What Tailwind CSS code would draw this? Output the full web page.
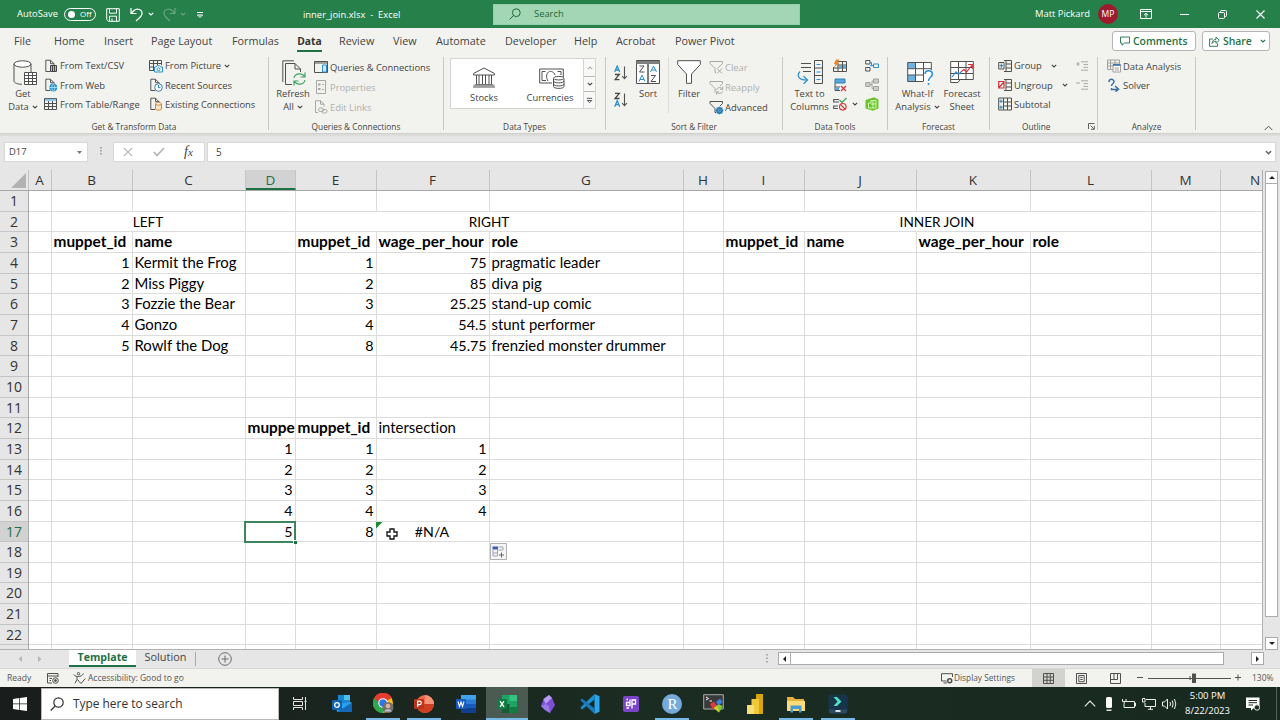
<!DOCTYPE html>
<html lang="en">
<head>
<meta charset="utf-8">
<title>inner_join.xlsx - Excel</title>
<script src="https://cdn.jsdelivr.net/npm/@tailwindcss/browser@4"></script>
</head>
<body class="w-[1280px] h-[720px] overflow-hidden bg-[#e6e6e6] font-['Open_Sans',sans-serif] text-[#444] flex flex-col">

<svg class="hidden">
  <symbol id="chev" viewBox="0 0 6 4"><path d="M.8 .8L3 3L5.2 .8" fill="none" stroke="currentColor" stroke-width="1.1"/></symbol>
  <symbol id="doc" viewBox="0 0 14 14"><path d="M6 12.5H1.8V1.2H6.5L10 4.7V6M6.5 1.2V4.7H10" fill="none" stroke="#555" stroke-width="1"/></symbol>
</svg>

<!-- Title bar -->
<header class="h-[28px] shrink-0 bg-[#26804a] text-white flex items-center text-[9.4px] whitespace-nowrap">
  <span class="ml-[17px] w-[47px]">AutoSave</span>
  <span class="w-[32px] h-[13px] rounded-full border border-white flex items-center pl-[3px]"><i class="size-[7px] rounded-full bg-white"></i><b class="ml-[5px] font-normal text-[8px] leading-none">Off</b></span>
  <svg class="ml-[10px] size-[14px] mt-[2px]" viewBox="0 0 14 14" fill="none" stroke="#fff"><path d="M.7 .7H13.3V13.3H2.5L.7 11.5ZM3.5 .7V5.2H10.5V.7M3.5 13V8.2H10.5V13M6 13V10.5"/></svg>
  <svg class="ml-[10px] w-[14px] h-[15px] mt-[1px]" viewBox="0 0 14 15" fill="none" stroke="#fff" stroke-width="1.2"><path d="M1 1V6.5H6.5M1 6.5L4 3.5C7 .8 12.5 2.5 12 7C11.8 9.5 9 11 6 14"/></svg>
  <svg class="ml-[4px] w-[6px] h-[4px]"><use href="#chev"/></svg>
  <svg class="ml-[8px] w-[14px] h-[15px] mt-[1px] opacity-30" viewBox="0 0 14 15" fill="none" stroke="#fff" stroke-width="1.2"><path d="M13 1V6.5H7.5M13 6.5L10 3.5C7 .8 1.5 2.5 2 7C2.2 9.5 5 11 8 14"/></svg>
  <svg class="ml-[4px] w-[6px] h-[4px] opacity-30"><use href="#chev"/></svg>
  <svg class="ml-[10px] w-[8px] h-[8px] mt-[1px]" viewBox="0 0 8 8" fill="none" stroke="#fff"><path d="M1 1.5H7M1.5 4L4 6.5L6.5 4Z"/></svg>
  <span class="ml-[99px] w-[190px] whitespace-pre pt-[2px]">inner_join.xlsx  -  Excel</span>
  <div class="w-[307px] h-[21px] bg-[#a3d6b4] text-[#1e6b3c] flex items-center border border-[#98cfab]">
    <svg class="ml-[15px] size-[12px]" viewBox="0 0 12 12" fill="none" stroke="#1e6b3c"><circle cx="7.3" cy="4.7" r="3.9"/><path d="M4.5 7.5L.6 11.4"/></svg>
    <span class="ml-[13px]">Search</span>
  </div>
  <span class="ml-[235px] w-[63px]">Matt Pickard</span>
  <span class="size-[20px] rounded-full bg-[#9e1a2d] flex items-center justify-center text-[8.5px]">MP</span>
  <svg class="ml-[22px] w-[12px] h-[10px]" viewBox="0 0 12 10" fill="none" stroke="#fff"><path d="M.5 .5H11.5V9.5H.5ZM.5 2.5H11.5M6 8.5V4.5M4 6.2L6 4.3L8 6.2"/></svg>
  <svg class="ml-[28px] w-[9px] h-[9px]" viewBox="0 0 9 9" stroke="#fff"><path d="M0 4.5H9"/></svg>
  <svg class="ml-[29px] size-[9px]" viewBox="0 0 9 9" fill="none" stroke="#fff"><rect x=".5" y="2.5" width="6" height="6" rx="1"/><path d="M2.5 2V1.5Q2.5 .5 3.5 .5H7.5Q8.5 .5 8.5 1.5V5.5Q8.5 6.5 7.5 6.5H7"/></svg>
  <svg class="ml-[29px] size-[9px]" viewBox="0 0 9 9" stroke="#fff" stroke-width="1.1"><path d="M.5 .5L8.5 8.5M8.5 .5L.5 8.5"/></svg>
</header>

<!-- Ribbon tabs -->
<nav class="h-[28px] shrink-0 bg-[#f2f3ee] flex text-[10.8px] leading-[26px] whitespace-nowrap">
  <span class="ml-[14px] w-[40px]">File</span><span class="w-[50px]">Home</span><span class="w-[47px]">Insert</span><span class="w-[81px]">Page Layout</span><span class="w-[64px]">Formulas</span><span class="w-[43px]"><b class="ml-[1px] block w-[25px] h-[24px] border-b-2 border-[#1e7145] text-[#333] font-bold text-[10.3px] text-center">Data</b></span><span class="w-[54px]">Review</span><span class="w-[43px]">View</span><span class="w-[69px]">Automate</span><span class="w-[69px]">Developer</span><span class="w-[42px]">Help</span><span class="w-[59px]">Acrobat</span><span class="w-[437px]">Power Pivot</span>
  <span class="mt-[3px] w-[84px] h-[20px] bg-white border border-[#b5b5b5] rounded-[3px] flex items-center text-[#1e7145] font-semibold text-[10.4px] leading-none">
    <svg class="ml-[7px] mr-[3px] size-[10px]" viewBox="0 0 10 10" fill="none" stroke="#1e7145" stroke-width=".9"><path d="M.5 1H9.5V7H4.5L2 9.3V7H.5Z"/></svg>Comments</span>
  <span class="mt-[3px] ml-[6px] w-[68px] h-[20px] bg-white border border-[#b5b5b5] rounded-[3px] flex items-center text-[#1e7145] font-semibold text-[10.4px] leading-none">
    <svg class="ml-[6px] mr-[3px] size-[11px]" viewBox="0 0 11 11" fill="none" stroke="#1e7145" stroke-width=".9"><path d="M4 3H.6V10.3H8.6V7.5M3 7.5C3.3 4.5 5 3.3 7 3.3V1L10.3 4.2L7 7.3V5.2C5.3 5.2 4.2 5.8 3 7.5Z"/></svg>Share<svg class="ml-[8px] w-[6px] h-[4px]"><use href="#chev"/></svg></span>
</nav>

<!-- Ribbon -->
<section class="h-[78px] shrink-0 bg-[#f2f3ee] border-b border-[#cfcfcd] flex text-[9.4px] leading-[13px] whitespace-nowrap">
  <!-- Get & Transform -->
  <div class="w-[268px] flex flex-col">
    <div class="h-[64px] shrink-0 flex">
      <div class="ml-[3px] w-[40px] pt-[4px] flex flex-col items-center">
        <svg class="ml-[4px] w-[24px] h-[26px] mb-[1px]" viewBox="0 0 24 26" fill="none" stroke="#505050"><ellipse cx="9.5" cy="4" rx="8.5" ry="3.2" fill="#fff"/><path d="M1 4V21C1 23 5 24.3 9 24.3M18 4V12"/><path d="M11.500 12.500H23.500V24.500H11.500Z" fill="#fff"/><path d="M11.500 15.500H23.500M11.500 18.500H23.500M11.500 21.500H23.500M15.500 12.500V24.500M19.500 12.500V24.500"/></svg>
        <span>Get</span><span class="flex items-center gap-[3px]">Data <svg class="w-[6px] h-[4px]"><use href="#chev"/></svg></span>
      </div>
      <div class="ml-[1px] w-[105px]">
        <div class="h-[19.4px] flex items-center gap-[2px]"><svg class="size-[14px]" viewBox="0 0 14 14"><use href="#doc"/><path d="M6.500 6.500H12.500V12.500H6.500ZM8.500 6.500V12.500M10.500 6.500V12.500" fill="#bbb" stroke="#444"/></svg>From Text/CSV</div>
        <div class="h-[19.4px] flex items-center gap-[2px]"><svg class="size-[14px]" viewBox="0 0 14 14"><use href="#doc"/><circle cx="9.300" cy="9.500" r="3.900" fill="#2b8fd0"/><path d="M5.500 9.500H13M9.300 5.700C7.300 8 7.300 11 9.300 13.300C11.300 11 11.300 8 9.300 5.700" fill="none" stroke="#dff" stroke-width=".6"/></svg>From Web</div>
        <div class="h-[19.4px] flex items-center gap-[2px]"><svg class="size-[14px]" viewBox="0 0 14 14" fill="none" stroke="#505050"><path d="M.5 1.500H12.500V12.500H.5ZM.5 6.500H12.500M.5 9.500H12.500M4.500 4V12.500M8.500 4V12.500"/><path d="M1 2.800H12" stroke="#7fbfe8" stroke-width="2"/></svg>From Table/Range</div>
      </div>
      <div>
        <div class="h-[19.4px] flex items-center gap-[2px]"><svg class="size-[14px]" viewBox="0 0 14 14" fill="none" stroke="#505050"><path d="M5 11.500H.5V1.500H12.500V6M.5 4.500H12.500M.5 8H5M4.500 1.500V11M8.500 1.500V6"/><path d="M5.500 8H7L8 6.700H10.500L11.500 8H13.500V13H5.500Z" fill="#fff" stroke="#2b8fd0"/><circle cx="9.500" cy="10.300" r="1.500" stroke="#2b8fd0"/></svg>From Picture<svg class="ml-[1px] w-[6px] h-[4px]"><use href="#chev"/></svg></div>
        <div class="h-[19.4px] flex items-center gap-[2px]"><svg class="size-[14px]" viewBox="0 0 14 14"><use href="#doc"/><circle cx="9.500" cy="9.500" r="3.800" fill="#fff" stroke="#2b7fb8"/><path d="M9.500 7V9.700H11.500" fill="none" stroke="#2b7fb8"/></svg>Recent Sources</div>
        <div class="h-[19.4px] flex items-center gap-[2px]"><svg class="size-[14px]" viewBox="0 0 14 14"><use href="#doc"/><path d="M6.500 7V12C6.500 13.500 12.500 13.500 12.500 12V7" fill="#fbe3c4" stroke="#d9822b"/><ellipse cx="9.500" cy="6.800" rx="3" ry="1.300" fill="#fff" stroke="#d9822b"/></svg>Existing Connections</div>
      </div>
    </div>
    <span class="text-center text-[8.3px] leading-[13px]">Get &amp; Transform Data</span>
  </div>
  <!-- Queries -->
  <div class="w-[175px] mt-[1px] mb-[3px] border-l border-[#c8c8c6] flex flex-col">
    <div class="h-[63px] shrink-0 flex">
      <div class="ml-[4px] w-[40px] pt-[3px] flex flex-col items-center">
        <svg class="ml-[2px] w-[24px] h-[26px] mb-[1px]" viewBox="0 0 24 26" fill="none" stroke="#505050"><path d="M.8 22V.8H12M3.500 24.500V3.500H13L18.500 9V12M13 3.500V9H18.500M3.500 24.500H10"/><path d="M12 18C13 13 20 12.500 22.500 16.500M23 12.500V17H18.500M23 20C22 25 15 25.500 12.500 21.500M12 25.500V21H16.500" stroke="#3fa35f" stroke-width="1.200"/></svg>
        <span>Refresh</span><span class="flex items-center gap-[3px]">All <svg class="w-[6px] h-[4px]"><use href="#chev"/></svg></span>
      </div>
      <div class="pl-[1px]">
        <div class="h-[20px] flex items-center gap-[2px]"><svg class="size-[14px]" viewBox="0 0 14 14" fill="none" stroke="#505050"><path d="M.5 1.500H13.500V12.500H.5ZM.5 3H13.500"/><path d="M8.500 5H12.500V12H8.500Z" fill="#cfe6f7" stroke="#2b8fd0"/></svg>Queries &amp; Connections</div>
        <div class="h-[20px] flex items-center gap-[2px] text-[#b0b0ae]"><svg class="size-[14px]" viewBox="0 0 14 14" fill="none" stroke="#a8a8a6"><path d="M2.500 .5H11.500V13.500H2.500ZM4 4.500H6M8 4.500H10M4 9.500H6M8 9.500H10" stroke-width="1"/><path d="M4 4.500H6.500M4 9H6.500" stroke-width="2"/></svg>Properties</div>
        <div class="h-[20px] flex items-center gap-[2px] text-[#b0b0ae]"><svg class="size-[14px]" viewBox="0 0 14 14" fill="none" stroke="#a8a8a6"><path d="M4 12.500H1.500V.7H6.500L10 4.200V6.500M6.500 .7V4.200H10"/><rect x="4.500" y="8" width="5" height="3.500" rx="1.700"/><rect x="8" y="9.500" width="5" height="3.500" rx="1.700"/></svg>Edit Links</div>
      </div>
    </div>
    <span class="shrink-0 text-center text-[8.3px]">Queries &amp; Connections</span>
  </div>
  <!-- Data Types -->
  <div class="w-[162px] mt-[1px] mb-[3px] border-l border-[#c8c8c6] flex flex-col">
    <div class="h-[63px] shrink-0 pt-[1px] pl-[6px]">
      <div class="w-[146px] h-[51px] bg-white border border-[#d4d4d2] flex">
        <div class="w-[66px] pt-[8px] flex flex-col items-center"><svg class="w-[24px] h-[21px] mb-[3px]" viewBox="0 0 24 21" fill="none" stroke="#505050"><path d="M1.500 6.500L12 1L22.500 6.500V8H1.500ZM3.500 17.500H20.500M1 20H23M4.500 8V17M7 8V17M10.500 8V17M13.500 8V17M17 8V17M19.500 8V17"/><path d="M1.500 18.500H22.500" stroke="#999" stroke-width="2"/></svg>Stocks</div>
        <div class="w-[66px] pt-[8px] flex flex-col items-center"><svg class="ml-[4px] w-[26px] h-[22px] mb-[2px]" viewBox="0 0 26 22" fill="none" stroke="#505050"><path d="M13 16H.7V2H24.300V10M3 4.500V13.500M3 4.500H6.500M18.500 4.500H22V8M3 13.500H7"/><path d="M9 14C7 11 7 7 9.500 5C12 3.500 15 5 16 8"/><path d="M14.500 11.500V19.500C14.500 22 25 22 25 19.500V11.500M14.500 14C14.500 16.500 25 16.500 25 14M14.500 17C14.500 19.500 25 19.500 25 17" fill="#fff"/><ellipse cx="19.700" cy="11.200" rx="5.200" ry="1.800" fill="#fff"/></svg>Currencies</div>
        <div class="w-[12px] border-l border-[#d4d4d2] flex flex-col text-[#444] bg-[#f8f8f6]">
          <i class="h-[17px] flex items-center justify-center opacity-40"><svg class="w-[6px] h-[4px] rotate-180"><use href="#chev"/></svg></i>
          <i class="h-[16px] border-y border-[#bbb] flex items-center justify-center"><svg class="w-[6px] h-[4px]"><use href="#chev"/></svg></i>
          <i class="h-[16px] flex items-center justify-center"><svg class="w-[7px] h-[7px]" viewBox="0 0 8 8" fill="none" stroke="#444"><path d="M1 1.500H7M1.500 4L4 6.500L6.500 4Z"/></svg></i>
        </div>
      </div>
    </div>
    <span class="shrink-0 text-center text-[8.3px]">Data Types</span>
  </div>
  <!-- Sort & Filter -->
  <div class="w-[177px] mt-[1px] mb-[3px] border-l border-[#c8c8c6] flex flex-col">
    <div class="h-[63px] shrink-0 flex">
      <div class="ml-[8px] w-[15px] pt-[8px] flex flex-col gap-[11px]">
        <svg class="w-[14px] h-[16px]" viewBox="0 0 14 16" fill="none" stroke-width="1.300"><path d="M.7 7L3.200 1L5.700 7M1.500 5H5" stroke="#2b8fd0"/><path d="M1 9.500H5.300L1 14.700H5.500" stroke="#444"/><path d="M10.500 1.500V13.500M8 11L10.500 13.700L13 11" stroke="#505050" stroke-width="1.100"/></svg>
        <svg class="w-[14px] h-[16px]" viewBox="0 0 14 16" fill="none" stroke-width="1.300"><path d="M1 1.300H5.300L1 6.500H5.500" stroke="#444"/><path d="M.7 14.700L3.200 8.700L5.700 14.700M1.500 12.700H5" stroke="#2b8fd0"/><path d="M10.500 1.500V13.500M8 11L10.500 13.700L13 11" stroke="#505050" stroke-width="1.100"/></svg>
      </div>
      <div class="w-[38px] pt-[3px] flex flex-col items-center"><svg class="w-[24px] h-[24px] mb-[3px]" viewBox="0 0 24 24" fill="none" stroke="#505050"><path d="M.5 .5H23.500V23.500H.5Z" fill="#fff"/><path d="M.5 2.500H23.500" stroke-width="3" stroke="#808080"/><path d="M12 4V23.500" stroke-width="1.500"/><path d="M3.500 6H8L3.500 12H8.500M15 15.500H19.500L15 21.500H20"/><path d="M3 21.500L6 15L9 21.500M4 19.500H8M14.500 12L17.500 6L20.500 12M15.500 10H19.500" stroke="#2b8fd0"/></svg>Sort</div>
      <div class="w-[41px] h-[56px] ml-[1px] pt-[3px] flex flex-col items-center border-l border-[#dededc]"><svg class="w-[24px] h-[24px] mb-[3px]" viewBox="0 0 24 24" fill="#fff" stroke="#505050"><path d="M.7 .7H23.300V4.500L14.500 14V23.300H9.500V14L.7 4.500Z"/></svg>Filter</div>
      <div>
        <div class="h-[20px] flex items-center gap-[1px] text-[#b0b0ae]"><svg class="size-[15px]" viewBox="0 0 15 15" fill="none" stroke="#a8a8a6"><path d="M1 1.500H13.500V3.500L9 8M1 1.500V3.500L6 8.500V12.500H7M8 8.500L13 13.500M13 8.500L8 13.500"/></svg>Clear</div>
        <div class="h-[20px] flex items-center gap-[1px] text-[#b0b0ae]"><svg class="size-[15px]" viewBox="0 0 15 15" fill="none" stroke="#a8a8a6"><path d="M1 1.500H13.500V3.500L11 6M1 1.500V3.500L6 8.500V12.500M7.500 10C8 7 12 7 13.500 9M13.700 6.500V9.300H11M14 11C13 14 9 14 7.700 12M7.500 14.500V11.800H10"/></svg>Reapply</div>
        <div class="h-[20px] flex items-center gap-[1px]"><svg class="size-[15px]" viewBox="0 0 15 15" fill="none" stroke="#505050"><path d="M1 1.500H13.500V3.500L11 6M1 1.500V3.500L6 8.500V12.500H7"/><circle cx="10.500" cy="10.500" r="2.600" fill="#fff" stroke="#2b7fb8" stroke-width="1.800"/><path d="M10.500 6.500V14.500M6.500 10.500H14.500M7.700 7.700L13.300 13.300M13.300 7.700L7.700 13.300" stroke="#2b7fb8" stroke-width=".8"/></svg>Advanced</div>
      </div>
    </div>
    <span class="shrink-0 text-center text-[8.3px]">Sort &amp; Filter</span>
  </div>
  <!-- Data Tools -->
  <div class="w-[105px] mt-[1px] mb-[3px] border-l border-[#c8c8c6] flex flex-col">
    <div class="h-[63px] shrink-0 flex">
      <div class="ml-[6px] w-[41px] pt-[3px] flex flex-col items-center"><svg class="w-[26px] h-[24px] mb-[3px]" viewBox="0 0 26 24" fill="none" stroke="#505050"><path d="M4 3.500H14M4 7.500H14M6 11.500H14"/><path d="M17.500 .5H25.500V23.500H17.500ZM17.500 8H25.500M17.500 15.500H25.500"/><path d="M19.500 4.500H23.500M19.500 12H23.500M19.500 19.500H23.500M3 11.500C-.5 15 1 20 10 20M6.500 16L10.500 20L6.500 24" stroke="#2b8fd0" stroke-width="1.200"/></svg><span>Text to</span><span>Columns</span></div>
      <div class="ml-[3px] w-[32px] -mt-px">
        <div class="h-[19.4px] flex items-center"><svg class="size-[14px]" viewBox="0 0 14 14" fill="none" stroke="#505050"><path d="M5 2.500H13.500V12.500H.5V8M.5 9H13.500M5 6H13.500M5 4V12.500M9.500 2.500V12.500"/><path d="M6 6.500H9V9H6ZM10 6.500H13V9H10Z" fill="#5ba7dd" stroke="none"/><path d="M3 .5H6.500L4.800 3.500H6.500L1 8.500L2.500 5H.8Z" fill="#e8892b" stroke="none"/></svg></div>
        <div class="h-[19.4px] flex items-center"><svg class="size-[14px]" viewBox="0 0 14 14" fill="none" stroke="#2b7fb8"><path d="M2 1H12V5H2Z" fill="#5ba7dd"/><path d="M2 5V12.500H7M2 9H7" stroke="#505050"/><path d="M2.500 9.500H6V12H2.500Z" fill="#5ba7dd" stroke="none"/><path d="M8 8L13 13M13 8L8 13" stroke="#d13438" stroke-width="1.200"/></svg></div>
        <div class="h-[19.4px] flex items-center"><svg class="size-[14px]" viewBox="0 0 14 14" fill="none" stroke="#505050" stroke-width="1.100"><path d="M6 2.500H.7V5H6M5 9H.7V11.500H5"/><path d="M6.500 3L9 5.500L13.500 1" stroke="#2f9e55"/><circle cx="9.800" cy="9.800" r="3.300" stroke="#d13438"/><path d="M7.500 7.500L12 12" stroke="#d13438"/></svg><svg class="ml-[5px] w-[6px] h-[4px]"><use href="#chev"/></svg></div>
      </div>
      <div class="-mt-px">
        <div class="h-[19.4px] flex items-center"><svg class="size-[14px]" viewBox="0 0 14 14" fill="none" stroke="#505050"><path d="M.7 1.500H5V5H.7ZM.7 8.500H5V12H.7Z"/><path d="M8.500 5H13.500V8.500H8.500ZM5 3.500H6.500V6.500H8.500M5 6.700H8" stroke="#2b8fd0"/></svg></div>
        <div class="h-[19.4px] flex items-center"><svg class="size-[14px]" viewBox="0 0 14 14" fill="#ccc" stroke="#a0a09e"><path d="M.7 4.500H5V8.500H.7ZM8.500 1H13.500V5H8.500ZM8.500 8.500H13.500V12.500H8.500Z"/><path d="M5 6.500H7M8.500 3H7V10.500H8.500" fill="none"/></svg></div>
        <div class="h-[19.4px] flex items-center"><svg class="size-[14px]" viewBox="0 0 14 14"><path d="M.5 3L9 .3L13.500 2.500V11.500L8 13.700L.5 11.500Z" fill="#6cc52a"/><path d="M3.500 10V6H6V3.500H11V11H3.500ZM8 4V11M6 7H11" fill="none" stroke="#e9ffd8" stroke-width=".8"/></svg></div>
      </div>
    </div>
    <span class="shrink-0 text-center text-[8.3px]">Data Tools</span>
  </div>
  <!-- Forecast -->
  <div class="w-[102px] mt-[1px] mb-[3px] border-l border-[#c8c8c6] flex flex-col">
    <div class="h-[63px] shrink-0 flex">
      <div class="ml-[7px] w-[45px] pt-[3px] flex flex-col items-center"><svg class="ml-[4px] w-[26px] h-[25px] mb-[2px]" viewBox="0 0 26 25" fill="none" stroke="#505050"><path d="M.7 2.500H24.300V21.500H.7Z" fill="#fff" stroke="none"/><path d="M.7 2.500H8.500V8.500H.7ZM.7 15H8.500V21.500H.7Z" fill="#6fb3e3" stroke="none"/><path d="M16 21.500H.7V2.500H24.300V10M.7 8.700H24M.7 15H16M8.500 2.500V21.500M16.500 2.500V21.500"/><path d="M18 14C18 9.500 25.300 9.500 25.300 14C25.300 17.500 21.500 17 21.500 21M21.500 23V25" stroke="#2b8fd0" stroke-width="1.500"/></svg><span>What-If</span><span class="flex items-center gap-[3px]">Analysis <svg class="w-[6px] h-[4px]"><use href="#chev"/></svg></span></div>
      <div class="w-[44px] pt-[3px] flex flex-col items-center"><svg class="w-[24px] h-[24px] mb-[3px]" viewBox="0 0 24 24" fill="none" stroke="#505050"><path d="M.7 1.500H23.300V19.500H10L8 22.500H.7Z" fill="#fff"/><path d="M.7 7.500H23M.7 13.500H23M8.500 1.500V19.500M16 1.500V19.500M.7 19.500H10"/><path d="M2 17L6 12L8.500 14.500L12 11" stroke="#2b8fd0" stroke-width="1.200"/><path d="M12 11L14 9.500L16.500 12L22 5M18 4.500H22.300V9" stroke="#d13438" stroke-width="1.200"/></svg><span>Forecast</span><span>Sheet</span></div>
    </div>
    <span class="shrink-0 text-center text-[8.3px]">Forecast</span>
  </div>
  <!-- Outline -->
  <div class="w-[108px] mt-[1px] mb-[3px] border-l border-[#c8c8c6] flex flex-col">
    <div class="h-[63px] shrink-0 flex">
      <div class="ml-[8px] w-[78px] -mt-px">
        <div class="h-[19.4px] flex items-center gap-[2px]"><svg class="size-[14px]" viewBox="0 0 14 14" fill="none" stroke="#505050"><path d="M.7 3.500H6V10H.7ZM8 1.500H13.500V12.500H8ZM8 5H13.500M8 9H13.500M6 1.500H8M6 12.500H8"/><path d="M3.300 4.500V9M1.500 6.700H5" stroke="#2b7fb8"/></svg>Group<svg class="ml-[7px] w-[6px] h-[4px]"><use href="#chev"/></svg></div>
        <div class="h-[19.4px] flex items-center gap-[2px]"><svg class="size-[14px]" viewBox="0 0 14 14" fill="none" stroke="#505050"><path d="M8 1.500H13.500V12.500H8ZM8 5H13.500M8 9H13.500M6 1.500H8M6 12.500H8"/><path d="M.7 3.500H6V10H.7ZM1 9.500L6 4" stroke="#d13438" stroke-width="1.200"/></svg>Ungroup<svg class="ml-[7px] w-[6px] h-[4px]"><use href="#chev"/></svg></div>
        <div class="h-[19.4px] flex items-center gap-[2px]"><svg class="size-[14px]" viewBox="0 0 14 14" fill="none" stroke="#505050"><path d="M5.500 1H13.500V13H5.500ZM5.500 5H13.500M5.500 9H13.500M9.500 1V13M.7 1H5.500M.7 1V13H5.500"/><path d="M3 2.500V6M1.300 4.200H4.800M3 8.500V12M1.300 10.200H4.800" stroke="#2b7fb8"/></svg>Subtotal</div>
      </div>
      <div class="-mt-px">
        <div class="h-[19.4px] flex items-center"><svg class="w-[12px] h-[10px]" viewBox="0 0 12 10" stroke="#a8a8a6"><path d="M0 3H4M2 1V5M5 .8H12M7.500 3.600H12M7.500 6.400H12M5 9.200H12"/></svg></div>
        <div class="h-[19.4px] flex items-center"><svg class="w-[12px] h-[10px]" viewBox="0 0 12 10" stroke="#a8a8a6"><path d="M0 3H4M5 .8H12M7.500 3.600H12M7.500 6.400H12M5 9.200H12"/></svg></div>
      </div>
    </div>
    <div class="shrink-0 flex items-center text-[8.3px]"><span class="ml-[32px] w-[66px]">Outline</span><svg class="size-[7px]" viewBox="0 0 7 7" fill="none" stroke="#505050" stroke-width=".9"><path d="M.5 6V.5H6.500M2.500 2.500L6 6M6.300 3V6.300H3"/></svg></div>
  </div>
  <!-- Analyze -->
  <div class="w-[99px] mt-[1px] mb-[3px] border-x border-[#c8c8c6] flex flex-col">
    <div class="h-[63px] shrink-0 pl-[9px]">
      <div class="h-[18.4px] flex items-center gap-[2px]"><svg class="size-[14px]" viewBox="0 0 14 14" fill="none" stroke="#a0a09e"><path d="M.5 1H12.500V10.500H.5ZM.5 4H12.500M.5 7H6M3.500 1V10.500M8 1V5"/><path d="M6 5.500H13.500V13H6Z" fill="#fff"/><path d="M6 6H13.500" stroke="#2b6fb0" stroke-width="1.600"/><path d="M7.500 9H12M7.500 11H12"/></svg>Data Analysis</div>
      <div class="h-[19.4px] flex items-center gap-[2px]"><svg class="size-[14px]" viewBox="0 0 14 14" fill="none" stroke="#3b6ea8" stroke-width="1.500"><path d="M2 4C2 .5 7 .5 7 3.800C7 6 4.500 5.500 4.500 8M4.500 10V11.500H10M8 8L11.500 11.300L8.500 13.700"/></svg>Solver</div>
    </div>
    <span class="shrink-0 text-center text-[8.3px]">Analyze</span>
  </div>
  <div class="flex-1 flex items-end justify-end pr-[7px] pb-[2px]"><svg class="w-[9px] h-[6px]" viewBox="0 0 9 6" fill="none" stroke="#505050"><path d="M.7 5L4.500 1.200L8.300 5"/></svg></div>
</section>

<!-- Formula bar -->
<section class="h-[36px] shrink-0 flex items-start pt-[6px] border-t-2 border-[#dcdcda] text-[9.4px]">
  <div class="ml-[4px] w-[84px] h-[20px] bg-white border border-[#d8d8d8] flex items-center justify-between pl-[4px] pr-[5px]">D17<svg class="w-[5px] h-[3px]" viewBox="0 0 5 3"><path d="M0 0H5L2.500 3Z" fill="#777"/></svg></div>
  <svg class="mt-[2px] ml-[12px] w-[2px] h-[14px]" viewBox="0 0 2 14" fill="#a8a8a8"><path d="M0 3H2V4.500H0ZM0 6H2V7.500H0ZM0 9H2V10.500H0Z"/></svg>
  <div class="ml-[11px] w-[92px] h-[20px] bg-white border border-[#d8d8d8] flex items-center">
    <svg class="ml-[9px] size-[10px]" viewBox="0 0 10 10" stroke="#b5b5b5" stroke-width="1.200"><path d="M.8 .8L9.200 9.200M9.200 .8L.8 9.200"/></svg>
    <svg class="ml-[20px] w-[12px] h-[10px]" viewBox="0 0 12 10" fill="none" stroke="#b5b5b5" stroke-width="1.700"><path d="M.8 5L4 8.500L11 1"/></svg>
    <i class="ml-[19px] font-['Liberation_Serif',serif] text-[14px] leading-none text-[#444]">f<span class="text-[11px]">x</span></i>
  </div>
  <div class="ml-[2px] w-[1069px] h-[20px] bg-white border border-[#d8d8d8] flex items-center justify-between pl-[8px] pr-[3px] text-[10px]">5<svg class="w-[7px] h-[5px]" viewBox="0 0 6 4" fill="none" stroke="#666" stroke-width="1.300"><path d="M.8 .8L3 3L5.200 .8"/></svg></div>
</section>

<!-- Worksheet -->
<main class="h-[480px] shrink-0 flex">
  <div class="w-[1263px] flex flex-col border-r border-b border-[#b0b0b0] overflow-hidden">
    <div id="head" class="h-[21px] shrink-0 flex border-b border-[#a8a8a8] text-[13.5px] leading-[21px] text-[#333]"></div>
    <div class="flex h-[458px] overflow-hidden">
      <div id="nums" class="w-[29px] shrink-0 border-r border-[#a8a8a8] bg-[#e6e6e6] text-[#333] text-[14px] leading-[20px] text-center"></div>
      <div id="body" class="relative w-[1234px] shrink-0 bg-white text-black font-['Lato',sans-serif] text-[14.9px] leading-[20px] [font-variant-ligatures:none]">
        <div class="absolute left-[215px] top-[330px] w-[52px] h-[22px] border-2 border-[#1e7145]/85 z-10"></div>
        <i class="absolute left-[264px] top-[349px] size-[4px] bg-[#1e7145] border-t border-l border-white z-10"></i>
        <svg class="absolute left-[347px] top-[331px] w-[7px] h-[7px]" viewBox="0 0 7 7"><path d="M0 0H6.500L0 6.500Z" fill="#1e8a2e"/></svg>
        <svg class="absolute left-[357px] top-[337px] size-[12px]" viewBox="0 0 12 12"><path d="M4 1H8V4H11V8H8V11H4V8H1V4H4Z" fill="#fff" stroke="#111" stroke-width="1.300"/></svg>
        <svg class="absolute left-[461px] top-[352px] size-[17px]" viewBox="0 0 17 17"><path d="M.5 .5H16.500V16.500H.5Z" fill="#f5f5f5" stroke="#b0b0b0"/><path d="M2.500 3.500H8V6.500H2.500Z" fill="#3a5fb0"/><path d="M8.500 4H13V7H8.500M3 7V13H7.500V7M3 10H7.500" fill="none" stroke="#9aa4b8"/><path d="M11.500 9.500V14.500M9 12H14" stroke="#666"/></svg>
      </div>
    </div>
  </div>
  <div class="ml-[2px] mt-[1px] w-[13px] flex flex-col h-[479px]">
    <i class="h-[13px] bg-white border border-[#ababab] flex items-center justify-center"><svg class="w-[6px] h-[3px]" viewBox="0 0 6 3"><path d="M0 3H6L3 0Z" fill="#222"/></svg></i>
    <i class="h-[433px] bg-white border border-t-0 border-[#ababab]"></i>
    <i class="mt-auto h-[13px] bg-white border border-[#ababab] flex items-center justify-center"><svg class="w-[6px] h-[3px]" viewBox="0 0 6 3"><path d="M0 0H6L3 3Z" fill="#222"/></svg></i>
  </div>
</main>

<!-- Sheet tabs -->
<section class="h-[19px] shrink-0 flex items-start bg-[#e6e6e6] border-b border-[#d8d8d8] text-[10.9px] leading-[15px]">
  <svg class="ml-[18px] mt-[6px] w-[4px] h-[6px]" viewBox="0 0 4 6"><path d="M4 0V6L.5 3Z" fill="#b8b8b8"/></svg>
  <svg class="ml-[16px] mt-[6px] w-[4px] h-[6px]" viewBox="0 0 4 6"><path d="M0 0V6L3.500 3Z" fill="#b8b8b8"/></svg>
  <b class="ml-[27px] w-[67px] h-[17px] bg-white border-b-2 border-[#1e7145] text-[#1e7145] text-center text-[10.6px] leading-[14px]">Template</b>
  <span class="w-[59px] h-[15px] text-center leading-[14px]">Solution</span>
  <i class="mt-[2px] w-px h-[14px] bg-[#aaa]"></i>
  <svg class="ml-[22px] mt-[2px] size-[14px]" viewBox="0 0 14 14" fill="none" stroke="#6a6a6a"><circle cx="7" cy="7" r="6.300"/><path d="M3.500 7H10.500M7 3.500V10.500"/></svg>
  <svg class="ml-[534px] mt-[4px] w-[2px] h-[10px]" viewBox="0 0 2 10" fill="#aaa"><path d="M0 0H2V1.500H0ZM0 3.500H2V5H0ZM0 7H2V8.500H0Z"/></svg>
  <i class="ml-[10px] mt-[2px] w-[13px] h-[13px] bg-white border border-[#ababab] flex items-center justify-center"><svg class="w-[3px] h-[6px]" viewBox="0 0 3 6"><path d="M3 0V6L0 3Z" fill="#222"/></svg></i>
  <i class="mt-[2px] w-[433px] h-[13px] bg-white border border-l-0 border-[#ababab]"></i>
  <i class="ml-[27px] mt-[2px] w-[13px] h-[13px] bg-white border border-[#ababab] flex items-center justify-center"><svg class="w-[3px] h-[6px]" viewBox="0 0 3 6"><path d="M0 0V6L3 3Z" fill="#222"/></svg></i>
</section>

<!-- Status bar -->
<section class="h-[18px] shrink-0 bg-[#f2f3ee] flex items-center text-[8.5px] text-[#555] whitespace-nowrap">
  <span class="ml-[7px] w-[40px]">Ready</span>
  <svg class="w-[12px] h-[11px]" viewBox="0 0 12 11" fill="none" stroke="#505050"><path d="M5 10H.5V.5H11V4M.5 3H11M2.500 5.500H5M2.500 7.500H4"/><circle cx="8.500" cy="7.500" r="2.800"/><circle cx="8.500" cy="7.500" r="1" fill="#505050"/></svg>
  <svg class="ml-[14px] w-[13px] h-[12px]" viewBox="0 0 13 12" fill="none" stroke="#505050"><circle cx="5.500" cy="1.700" r="1.200"/><path d="M.7 2.500C2 4.500 4 4.500 5.500 4.500C7.500 4.500 9.500 3.500 10.500 1.500M4 4.500V7.500L2 11.300M4.500 7.500L6 9.500L8 11.500L12.300 6.500"/></svg>
  <span class="ml-[2px] w-[853px]">Accessibility: Good to go</span>
  <svg class="w-[12px] h-[11px]" viewBox="0 0 12 11" fill="none" stroke="#505050"><path d="M5.500 8H.5V.7H11.500V4M2.500 10H6"/><circle cx="8.700" cy="7.700" r="2" stroke-width="1.500"/></svg>
  <span class="ml-[1px] w-[78px] text-[8.3px]">Display Settings</span>
  <i class="w-[33px] h-[18px] bg-[#d2d2cf] flex items-center justify-center"><svg class="size-[11px]" viewBox="0 0 11 11" fill="none" stroke="#505050"><path d="M.5 .5H10.500V10.500H.5ZM.5 4H10.500M.5 7.300H10.500M4 .5V10.500M7.300 .5V10.500"/></svg></i>
  <svg class="ml-[11px] size-[11px]" viewBox="0 0 11 11" fill="none" stroke="#505050"><path d="M.5 .5H10.500V10.500H.5ZM2.800 2.500H8.200V8.700H2.800ZM4.300 4.500H6.700M4.300 6.500H6.700"/></svg>
  <svg class="ml-[23px] size-[11px]" viewBox="0 0 11 11" fill="none" stroke="#505050"><path d="M.5 .5H10.500V10.500H.5ZM.5 6.500H7.500V.5M4 .5V6.500"/></svg>
  <svg class="ml-[16px] w-[104px] h-[10px]" viewBox="0 0 104 10" stroke="#505050"><path d="M0 4.500H6M11 5.500H94M98 4.500H104M101 1.500V7.500M53 3V7"/><path d="M57 .5V10" stroke-width="4"/></svg>
  <span class="ml-[11px]">130%</span>
</section>

<!-- Windows taskbar -->
<footer class="h-[33px] shrink-0 bg-linear-to-r from-[#191d1b] via-[#1b2c22] to-[#182a20] flex items-center text-white">
  <svg class="ml-[13px] size-[14px]" viewBox="0 0 14 14" fill="#fff"><path d="M0 2L6.300 1V6.600H0ZM7 .9L14 0V6.600H7ZM0 7.300H6.300V13L0 12ZM7 7.300H14V14L7 13Z"/></svg>
  <div class="ml-[14px] w-[238px] h-[32px] bg-white border border-[#b8b8b8] flex items-center text-[#333] text-[11.9px]">
    <svg class="ml-[8px] size-[14px]" viewBox="0 0 14 14" fill="none" stroke="#333" stroke-width="1.200"><circle cx="8.500" cy="5.500" r="4.700"/><path d="M5.200 9L.7 13.500"/></svg>
    <span class="ml-[9px]">Type here to search</span>
  </div>
  <svg class="ml-[14px] w-[14px] h-[13px]" viewBox="0 0 14 13" fill="none" stroke="#e5e5e5"><path d="M.5 0V2.500H9.500V0M.5 4.500H9.500V8.500H.5ZM.5 13V10.500H9.500V13M12.500 0V13M11.500 4.500H13.500"/></svg>
  <div class="ml-[14px] flex h-[33px]">
    <i class="w-[41.350px] flex items-center justify-center"><svg class="w-[20px] h-[18px]" viewBox="0 0 20 18"><path d="M6 0H18V9H6Z" fill="#1a86d0"/><path d="M12 0H18V5H12Z" fill="#4cc2f0"/><path d="M4 9L19.500 7V17H5Z" fill="#2aa0e6"/><path d="M5 17L19.500 8V17Z" fill="#1468b8"/><rect y="5" width="10" height="10" rx="1" fill="#0f62ae"/><circle cx="5" cy="10" r="2.300" fill="none" stroke="#fff" stroke-width="1.300"/></svg></i>
    <i class="w-[41.350px] flex flex-col items-center justify-end"><svg class="size-[21px] mb-[4px]" viewBox="0 0 21 21"><circle cx="10" cy="10" r="10" fill="#fbc116"/><path d="M10 10L1.300 5A10 10 0 0 1 18.700 5Z" fill="#e33b2e"/><path d="M10 10L1.300 5A10 10 0 0 0 10 20L13.500 12Z" fill="#2da94f"/><path d="M1.300 5L5.700 12.500L10 10Z" fill="#2da94f"/><path d="M10 5H18.700A10 10 0 0 0 1.300 5L5 9Z" fill="#e33b2e"/><circle cx="10" cy="10" r="4.800" fill="#fff"/><circle cx="10" cy="10" r="3.700" fill="#2f76e8"/><circle cx="15" cy="14.500" r="5.500" fill="#75706a"/><circle cx="15" cy="13" r="2.300" fill="#d8b79e"/><path d="M11.500 18.500C12 15.500 18 15.500 18.500 18.500Z" fill="#b9c6d2"/></svg><b class="w-[34px] h-[2px] bg-[#76b9e6]"></b></i>
    <i class="w-[41.350px] flex flex-col items-center justify-end"><svg class="w-[20px] h-[18px] mb-[5px]" viewBox="0 0 20 18"><circle cx="11" cy="9" r="9" fill="#ee6b4a"/><path d="M11 0A9 9 0 0 1 20 9H11Z" fill="#f59378"/><path d="M2 9A9 9 0 0 0 20 9Z" fill="#cf3f22"/><rect y="4" width="10" height="10" rx="1" fill="#b9341a"/><path d="M3.700 12V6.200H5.500Q7.300 6.200 7.300 7.900Q7.300 9.600 5.500 9.600H3.700" fill="none" stroke="#fff" stroke-width="1.200"/></svg><b class="w-[34px] h-[2px] bg-[#76b9e6]"></b></i>
    <i class="w-[41.350px] flex items-center justify-center"><svg class="w-[20px] h-[18px]" viewBox="0 0 20 18"><path d="M5 0H20V5H5Z" fill="#41a0ec"/><path d="M5 4.500H20V9H5Z" fill="#2b7cd3"/><path d="M5 9H20V13.500H5Z" fill="#185abd"/><path d="M5 13.500H20V18H5Z" fill="#103f91"/><rect y="4" width="10" height="10" rx="1" fill="#185abd"/><path d="M2 6.500L3.500 11.500L5 7L6.500 11.500L8 6.500" fill="none" stroke="#fff" stroke-width="1.100"/></svg></i>
    <i class="w-[41.350px] flex flex-col items-center justify-end bg-[#4b5a52]"><svg class="w-[20px] h-[18px] mb-[5px]" viewBox="0 0 20 18"><path d="M5 0H20V18H5Z" fill="#21a366"/><path d="M12.500 0H20V6H12.500Z" fill="#33c481"/><path d="M5 9H12.500V18H5Z" fill="#185c37"/><path d="M12.500 12H20V18H12.500Z" fill="#107c41"/><rect y="4" width="10" height="10" rx="1" fill="#107c41"/><path d="M3 6.200L7 11.800M7 6.200L3 11.800" stroke="#fff" stroke-width="1.300"/></svg><b class="w-full h-[2px] bg-[#76b9e6]"></b></i>
    <i class="w-[41.350px] flex items-center justify-center"><svg class="w-[14px] h-[18px]" viewBox="0 0 14 18"><path d="M8 0L2.500 4L0 11L4 15L9 18L11.500 14L14 10L11 3Z" fill="#7c4fd6"/><path d="M8 0L2.500 4L4.500 9L11 3Z" fill="#b79df5"/><path d="M4.500 9L0 11L4 15L9 18L8 11Z" fill="#9a78e8"/></svg></i>
    <i class="w-[41.350px] flex items-center justify-center"><svg class="size-[20px]" viewBox="0 0 20 20"><path d="M14.500 0L19.500 2.200V17.800L14.500 20L14.500 14.500V5.500Z" fill="#2ba5ee"/><path d="M14.500 5.500L2 15.500L.3 13.800L14.500 0Z" fill="#1b8fd6"/><path d="M14.500 14.500L2 4.500L.3 6.200L14.500 20Z" fill="#1479bd"/></svg></i>
    <i class="w-[41.350px] flex items-center justify-center"><svg class="size-[16px]" viewBox="0 0 16 16"><rect width="16" height="16" rx="2" fill="#7b45c8"/><path d="M7 3.500V9.500H3.500V6.500H7M9 12.500V4H12.500V8H9M3.500 12H6M5 3.500H3.500" fill="none" stroke="#fff" stroke-width="1.300"/></svg></i>
    <i class="w-[41.350px] flex flex-col items-center justify-end not-italic"><span class="size-[20px] mb-[4px] rounded-full bg-[#75aadb] font-['Liberation_Serif',serif] text-[15px] leading-[20px] text-center">R</span><b class="w-[34px] h-[2px] bg-[#76b9e6]"></b></i>
    <i class="w-[41.350px] flex items-center justify-center"><svg class="w-[21px] h-[19px]" viewBox="0 0 21 19"><path d="M.7 .7H20.300V15H.7Z" fill="#3a3a3a" stroke="#aaa"/><path d="M3 3L5.500 4.500L3 6M6.500 7H9" fill="none" stroke="#fff"/><path d="M7 10L11 7.500L14 12L10 16Z" fill="#e03b3b"/><path d="M13 8L17 4.500L19.500 8L15.500 12Z" fill="#3b82e0"/><path d="M11 14L15 10.500L20 12L16 18.500Z" fill="#7bd032"/><path d="M11 14L14 12L16 18.500Z" fill="#f0cb27"/></svg></i>
    <i class="w-[41.350px] flex items-center justify-center"><svg class="w-[16px] h-[20px]" viewBox="0 0 16 20"><path d="M9 0H16V20H9Z" fill="#d9a514"/><path d="M4.500 5H12V20H4.500Z" fill="#f0c838"/><path d="M0 11H7V20H0Z" fill="#f7de7a"/></svg></i>
    <i class="w-[41.350px] flex flex-col items-center justify-end"><svg class="w-[18px] h-[16px] mb-[5px]" viewBox="0 0 18 16"><path d="M0 0H6L8 2H17V14H0Z" fill="#e8b23a"/><path d="M0 4H18V14H0Z" fill="#fbdc78"/><path d="M3.500 8.500H14.500V15.500H12V12H6V15.500H3.500Z" fill="#4a9bd0"/></svg><b class="w-[34px] h-[2px] bg-[#76b9e6]"></b></i>
    <i class="w-[41.350px] flex flex-col items-center justify-end"><svg class="size-[20px] mb-[4px]" viewBox="0 0 20 20"><rect x=".5" y=".5" width="19" height="19" rx="3" fill="#17344a"/><path d="M5.500 3L9 3L13.500 7.500L9 12L5.500 12L9.500 7.500Z" fill="#4fe0c4"/><path d="M1 15.500H7L8 16.500H12L13 15.500H19V17.500Q19 19.500 17 19.500H3Q1 19.500 1 17.500Z" fill="#2c4a62"/><path d="M7.500 16H12.500V18H7.500Z" fill="#d7e4ee"/></svg><b class="w-[34px] h-[2px] bg-[#76b9e6]"></b></i>
  </div>
  <div class="ml-[226px] flex items-center text-[9.500px]">
    <svg class="w-[12px] h-[7px]" viewBox="0 0 12 7" fill="none" stroke="#eee" stroke-width="1.100"><path d="M.8 6.300L6 1L11.200 6.300"/></svg>
    <svg class="ml-[9px] w-[8px] h-[14px]" viewBox="0 0 8 14"><rect x="1" width="6" height="11" rx="1.500" fill="#fff"/><path d="M1.500 12.500H6.500V14H1.500Z" fill="#ddd"/></svg>
    <svg class="ml-[9px] w-[14px] h-[11px]" viewBox="0 0 14 11" fill="none" stroke="#eee"><path d="M4 3.500H12.500V9.500H2V6M12.500 5H13.500V8H12.500M.5 1V3.500H4V1M2.200 3.500V6"/></svg>
    <svg class="ml-[6px] w-[14px] h-[12px]" viewBox="0 0 14 12" fill="none" stroke="#eee"><path d="M4 1.500H13.500V8.500H3V5M6 11.300H11M8.500 8.500V11M.5 .5H3V4H.5Z"/></svg>
    <svg class="ml-[6px] w-[15px] h-[12px]" viewBox="0 0 15 12" fill="none" stroke="#eee"><path d="M.5 4H2.500L5.500 1V11L2.500 8H.5ZM8 4Q9 6 8 8M10.200 2.500Q12 6 10.200 9.500M12.500 1Q15 6 12.500 11"/></svg>
    <div class="ml-[6px] w-[48px] text-center leading-[15px] -mt-px"><div>5:00 PM</div><div>8/22/2023</div></div>
    <svg class="ml-[15px] size-[14px]" viewBox="0 0 14 14"><path d="M0 .5H13.500V11H8L5 13.500V11H0Z" fill="#fff"/><path d="M2.500 3.500H11M2.500 5.700H11M2.500 8H7" stroke="#1b2c22"/><circle cx="11" cy="10.500" r="2.700" fill="#1b2c22" stroke="#ddd"/></svg>
    <i class="ml-[16px] w-px h-[33px] bg-[#56625b]"></i>
  </div>
</footer>

<script>
const widths = [23,81,113,50,81,113,194,40,81,112,114,121,69,42];
const letters = 'ABCDEFGHIJKLMN';
const cells = {
  3: {B:'*muppet_id',C:'*name',E:'*muppet_id',F:'*wage_per_hour',G:'*role',I:'*muppet_id',J:'*name',K:'*wage_per_hour',L:'*role'},
  4: {B:1,C:'Kermit the Frog',E:1,F:75,G:'pragmatic leader'},
  5: {B:2,C:'Miss Piggy',E:2,F:85,G:'diva pig'},
  6: {B:3,C:'Fozzie the Bear',E:3,F:25.25,G:'stand-up comic'},
  7: {B:4,C:'Gonzo',E:4,F:54.5,G:'stunt performer'},
  8: {B:5,C:'Rowlf the Dog',E:8,F:45.75,G:'frenzied monster drummer'},
  12: {D:'*muppe',E:'*muppet_id',F:'intersection'},
  13: {D:1,E:1,F:1}, 14: {D:2,E:2,F:2}, 15: {D:3,E:3,F:3}, 16: {D:4,E:4,F:4},
  17: {D:5,E:8,F:'#N/A'}
};
const merged = {B:[2,'LEFT'], E:[3,'RIGHT'], I:[4,'INNER JOIN']};
const el = (parent, cls, text, w) => {
  const d = document.createElement('div');
  d.className = cls; d.textContent = text ?? '';
  if (w) d.style.width = w + 'px';
  parent.appendChild(d); return d;
};
const head = document.getElementById('head'), nums = document.getElementById('nums'), body = document.getElementById('body');
const corner = el(head, 'shrink-0 border-r border-[#c4c4c4] flex items-end justify-end pr-[2px] pb-[2px]', '', 29);
corner.innerHTML = '<svg class="size-[15px]" viewBox="0 0 15 15"><path d="M15 0V15H0Z" fill="#b2b2b2"/></svg>';
widths.forEach((w, i) => {
  const c = letters[i];
  if (c === 'D') el(head, 'shrink-0 text-center border-r border-[#c4c4c4] bg-[#d2d2d2] text-[#1e7145] border-b-2 border-b-[#1e7145]', c, w);
  else if (c === 'N') el(head, 'shrink-0 pl-[29px]', c, w);
  else el(head, 'shrink-0 text-center pr-[1px] border-r border-[#c4c4c4]', c, w);
});
for (let r = 1; r <= 23; r++) {
  el(nums, r === 17 ? 'h-[20.67px] border-b border-[#c4c4c4] bg-[#d2d2d2] text-[#1e7145]' : 'h-[20.67px] border-b border-[#c4c4c4]', r === 23 ? '' : r);
  const row = el(body, 'flex h-[20.67px] border-b border-[#dcdcdc]');
  for (let i = 0; i < 14; i++) {
    const c = letters[i];
    if (r === 2 && merged[c]) {
      const [n, t] = merged[c];
      const w = widths.slice(i, i + n).reduce((a, b) => a + b);
      el(row, 'shrink-0 text-center text-[13.6px] pr-[1px] border-r border-[#dcdcdc]', t, w);
      i += n - 1; continue;
    }
    const v = (cells[r] || {})[c];
    if (typeof v === 'number') el(row, 'shrink-0 text-right text-[14.3px] pr-[2.4px] border-r border-[#dcdcdc]', v, widths[i]);
    else if (v === '#N/A') el(row, 'shrink-0 text-center text-[14.2px] pr-[2px] border-r border-[#dcdcdc]', v, widths[i]);
    else if (v && v[0] === '*') el(row, 'shrink-0 whitespace-nowrap font-bold text-[15.4px] leading-[19.5px] pl-[1.5px] border-r border-[#dcdcdc]', v.slice(1), widths[i]);
    else el(row, 'shrink-0 whitespace-nowrap text-[14.9px] leading-[19px] pl-[1.5px] border-r border-[#dcdcdc]', v, widths[i]);
  }
}
</script>
</body>
</html>
